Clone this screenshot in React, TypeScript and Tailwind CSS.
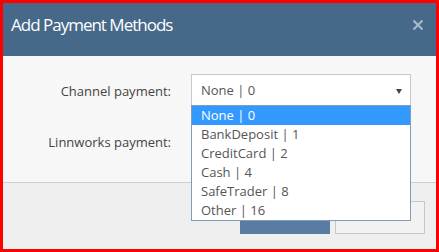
import React from "react";

const items = ["None | 0", "BankDeposit | 1", "CreditCard | 2", "Cash | 4", "SafeTrader | 8", "Other | 16"];

export default function App() {
  return (
    <div
      className="w-[439px] h-[252px] border-[3px] border-[#ff0000] bg-[#efefef] flex flex-col overflow-hidden"
      style={{ fontFamily: '"Open Sans", "Noto Sans", sans-serif' }}
    >
      <div className="h-[53px] shrink-0 bg-[#466889] flex items-start justify-between pl-[8px] pr-[12px] pt-[10px]">
        <span className="text-white text-[17px] leading-[24px] tracking-[-1px]">Add Payment Methods</span>
        <svg width="12" height="12" viewBox="0 0 12 12" className="mt-[6px]">
          <path d="M1.5 1.5 L10.5 10.5 M10.5 1.5 L1.5 10.5" stroke="#a6b9cc" strokeWidth="2.2" strokeLinecap="butt" />
        </svg>
      </div>
      <div className="relative h-[127px] shrink-0 bg-[#f7f7f7] border-b border-[#cfcfcf] pt-[18px]">
        <div className="grid grid-cols-[168px_220px] gap-x-[20px] gap-y-[17px] items-center">
          <div className="text-right text-[13px] text-[#444] pt-[2px]">Channel payment:</div>
          <div className="h-[34px] bg-white border border-[#c8c8c8] flex items-center justify-between pl-[9px] pr-[8px] text-[13px] text-[#555]">
            <span>None | 0</span>
            <svg width="6" height="5" viewBox="0 0 6 5"><path d="M0 0 L6 0 L3 5 Z" fill="#444" /></svg>
          </div>
          <div className="text-right text-[13px] text-[#444] pt-[2px]">Linnworks payment:</div>
          <div className="h-[34px] bg-white border border-[#c8c8c8]" />
        </div>
        <div className="absolute left-[188px] top-[49px] w-[220px] bg-white border border-[#7f9db9] z-10">
          {items.map((t, i) => (
            <div
              key={t}
              className={
                "h-[19px] leading-[19px] pl-[9px] text-[13px] " +
                (i === 0 ? "bg-[#3399ff] text-white" : "text-[#555]")
              }
            >
              {t}
            </div>
          ))}
        </div>
      </div>
      <div className="flex-1 flex justify-end items-start gap-[5px] pt-[18px] pr-[11px]">
        <div className="w-[90px] h-[33px] bg-[#5a7ca3]" />
        <div className="w-[90px] h-[33px] bg-[#f2f2f2] border border-[#c8c8c8]" />
      </div>
    </div>
  );
}
